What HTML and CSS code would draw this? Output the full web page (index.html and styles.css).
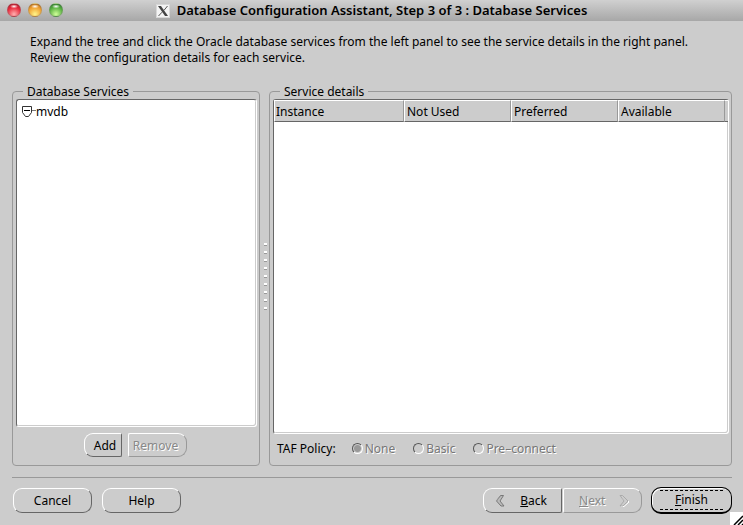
FILE: index.html
```html
<!DOCTYPE html>
<html lang="en">
<head>
  <meta charset="UTF-8" />
  <meta name="viewport" content="width=device-width, initial-scale=1" />
  <title>Database Configuration Assistant, Step 3 of 3 : Database Services</title>
  <link rel="stylesheet" href="styles.css">
</head>
<body>
  <header class="titlebar">
    <div class="lights">
      <button class="light red" type="button" aria-label="Close"></button>
      <button class="light yellow" type="button" aria-label="Minimize"></button>
      <button class="light green" type="button" aria-label="Zoom"></button>
    </div>
    <svg class="x-icon" width="14" height="14" viewBox="0 0 14 14" aria-hidden="true">
      <rect x="0.5" y="0.5" width="13" height="13" fill="#f4f4f4" stroke="#d8d8d8" />
      <path d="M2 2h3l7 10H9z" fill="#444" />
      <path d="M11.5 2L8 6.3M6 8.2L2.5 12" stroke="#555" fill="none" />
    </svg>
    <h1>Database Configuration Assistant, Step 3 of 3 : Database Services</h1>
  </header>

  <main>
    <p class="intro">
      Expand the tree and click the Oracle database services from the left panel to see the service details in the right panel.<br>
      Review the configuration details for each service.
    </p>

    <div class="panes">
      <fieldset class="group">
        <legend>Database Services</legend>
        <div class="well">
          <ul class="tree">
            <li>
              <svg width="14" height="13" viewBox="0 0 14 13" aria-hidden="true">
                <path d="M0.5 1.5h9v6l-3 4h-3l-3-4z" fill="#fff" stroke="#333" />
                <path d="M2 5.5h6" stroke="#000" />
                <path d="M10 5.5h4" stroke="#777" />
              </svg>
              <span>mvdb</span>
            </li>
          </ul>
        </div>
        <div class="service-buttons">
          <button class="btn btn-left add" type="button">Add</button>
          <button class="btn btn-right remove" type="button" disabled>Remove</button>
        </div>
      </fieldset>

      <div class="splitter"><span class="grip"></span></div>

      <fieldset class="group">
        <legend>Service details</legend>
        <div class="well">
          <table class="details">
            <thead>
              <tr>
                <th class="wide">Instance</th>
                <th>Not Used</th>
                <th>Preferred</th>
                <th>Available</th>
                <td></td>
              </tr>
            </thead>
          </table>
        </div>
        <div class="taf">
          <span class="taf-label">TAF Policy:</span>
          <label><input type="radio" name="taf" checked disabled>None</label>
          <label><input type="radio" name="taf" disabled>Basic</label>
          <label><input type="radio" name="taf" disabled>Pre–connect</label>
        </div>
      </fieldset>
    </div>
  </main>

  <footer class="actions">
    <button class="btn big" type="button">Cancel</button>
    <button class="btn big" type="button">Help</button>
    <div class="wizard">
      <button class="btn btn-left big back" type="button">
        <svg width="10" height="12" viewBox="0 0 10 12" aria-hidden="true">
          <path d="M5.5 0.5h3L5 6l4 5H6L1.5 6z" fill="#bbb" stroke="#777" />
          <path d="M5.5 1L1 6" stroke="#999" />
        </svg>
        <span><u>B</u>ack</span>
      </button>
      <button class="btn btn-right big next" type="button" disabled>
        <span><u>N</u>ext</span>
        <svg width="11" height="12" viewBox="0 0 11 12" aria-hidden="true">
          <path d="M2 1.5h2.500L10 7l-5 4.5H2L6 7z" fill="none" stroke="#fff" />
          <path d="M1 0.5h2.500L9 6l-5 5H1L5 6z" fill="#ccc" stroke="#aaa" />
        </svg>
      </button>
    </div>
    <button class="btn finish" type="button"><span><u>F</u>inish</span></button>
  </footer>

  <svg class="resize" width="13" height="13" viewBox="0 0 13 13" aria-hidden="true">
    <rect width="13" height="13" fill="#fff" />
    <path d="M4 13L13 4M8 13l5-5M12 13l1-1" stroke="#000" stroke-width="1.5" />
  </svg>
</body>
</html>
```
FILE: styles.css
```css
:root {
  --bg: #cccccc;
  --line: #999999;
  --dark: #666666;
}

* {
  box-sizing: border-box;
}

html, body {
  margin: 0;
  padding: 0;
  height: 100%;
}

body {
  display: flex;
  flex-direction: column;
  position: relative;
  min-height: 100vh;
  background: var(--bg);
  color: #000;
  font-family: "Noto Sans", "Open Sans", sans-serif;
  font-size: 12px;
  line-height: 15px;
}

button, input {
  font: inherit;
  margin: 0;
}

/* title bar */
.titlebar {
  display: flex;
  align-items: center;
  justify-content: center;
  gap: 7px;
  position: relative;
  height: 21px;
  background: linear-gradient(to bottom, #d0d0d0, #a7a7a7);
}

.titlebar h1 {
  margin: 0;
  font-size: 13px;
  font-weight: 600;
  white-space: nowrap;
}

.lights {
  position: absolute;
  left: 7px;
  top: 3px;
  display: flex;
  gap: 7px;
}

.light {
  width: 14px;
  height: 14px;
  padding: 0;
  border: 1px solid #7775;
  border-radius: 50%;
}

.red { background: radial-gradient(ellipse 4px 2px at 50% 20%, #fff, #fff0), radial-gradient(circle at 50% 85%, #ffb0b0, #e8283a 60%, #a01020); }
.yellow { background: radial-gradient(ellipse 4px 2px at 50% 20%, #fff, #fff0), radial-gradient(circle at 50% 85%, #fff58a, #f0a030 60%, #a86010); }
.green { background: radial-gradient(ellipse 4px 2px at 50% 20%, #fff, #fff0), radial-gradient(circle at 50% 85%, #d0ff9a, #58b040 60%, #207020); }

/* content */
main {
  flex: 1;
  display: flex;
  flex-direction: column;
  padding: 13px 11px 0 12px;
}

.intro {
  margin: 0 0 18px;
  padding-left: 18px;
  line-height: 16px;
}

.panes {
  flex: 1;
  display: grid;
  grid-template-columns: 248px 9px 1fr;
}

.group {
  display: flex;
  flex-direction: column;
  min-width: 0;
  margin: 0;
  padding: 0 2px 8px 3px;
  border: 1px solid var(--line);
  border-radius: 4px;
}

.group legend {
  margin-left: 7px;
  padding: 0 4px;
}

.well {
  flex: 1;
  background: #fff;
  border: 1px solid;
  border-color: var(--dark) #fff #fff var(--dark);
  border-radius: 3px;
  box-shadow: inset -1px -1px 0 var(--bg);
}

.tree {
  list-style: none;
  margin: 0;
  padding: 4px 5px;
}

.tree li {
  display: flex;
  align-items: center;
}

.service-buttons {
  display: flex;
  justify-content: center;
  gap: 6px;
  padding: 6px 2px 0 0;
}

.splitter {
  display: flex;
  align-items: center;
  justify-content: center;
  padding: 8px 0 0 2px;
}

.grip {
  width: 3px;
  height: 72px;
  background: linear-gradient(#fff 2px, var(--line) 2px, var(--line) 3px, transparent 3px) 0 0 / 3px 8px;
}

.details {
  width: 100%;
  border-collapse: separate;
  border-spacing: 0;
  table-layout: fixed;
}

.details th,
.details td {
  height: 22px;
  padding: 0 2px;
  background: var(--bg);
  border: 1px solid;
  border-color: #fff var(--line) var(--dark) #fff;
  font-weight: normal;
  text-align: left;
}

.details th {
  width: 107px;
}

.details .wide {
  width: auto;
  padding-left: 1px;
}

.details td {
  width: 3px;
  padding: 0;
  border-left: 0;
  border-right: 0;
}

.taf {
  display: flex;
  align-items: center;
  gap: 18px;
  padding: 7px 4px 1px;
}

.taf-label {
  margin-right: -2px;
}

.taf label {
  display: flex;
  align-items: center;
  gap: 2px;
  color: #777;
  text-shadow: 1px 1px 0 #fff;
}

.taf input {
  appearance: none;
  width: 11px;
  height: 11px;
  border: 1px solid;
  border-color: #555 #fff #fff #555;
  border-radius: 50%;
}

.taf input:checked {
  background: radial-gradient(circle, #999 3px, transparent 4px);
}

/* buttons */
.btn {
  height: 24px;
  padding: 0;
  background: var(--bg);
  border: 1px solid;
  border-color: #fff var(--dark) var(--dark) #fff;
  border-radius: 9px;
  color: #000;
}

.btn:disabled {
  border-color: #fff var(--line) var(--line) #fff;
  color: #888;
  text-shadow: 1px 1px 0 #fff;
}

.btn-left {
  border-radius: 9px 2px 2px 9px;
}

.btn-right {
  border-radius: 2px 9px 9px 2px;
}

.add {
  width: 38px;
  padding-left: 4px;
}

.remove {
  width: 59px;
  padding-right: 4px;
}

.big {
  width: 79px;
  height: 25px;
}

.actions {
  display: flex;
  align-items: center;
  gap: 10px;
  margin: 11px 11px 0 12px;
  padding: 9px 0 11px 1px;
  border-top: 1px solid var(--line);
}

.wizard {
  display: flex;
  gap: 1px;
  margin: 0 -1px 0 auto;
}

.back,
.next {
  display: flex;
  align-items: center;
  justify-content: space-between;
  padding: 0 14px 0 11px;
}

.next {
  padding: 0 11px 0 15px;
}

.finish {
  width: 81px;
  height: 27px;
  padding: 0 8px;
  border: 1px solid #000;
  border-bottom-width: 2px;
  border-radius: 10px;
  box-shadow: inset 1px 1px 0 #fff;
}

.finish span {
  display: block;
  border: 1px dashed #000;
  border-width: 1px 0;
  line-height: 18px;
}

.resize {
  position: absolute;
  right: 0;
  bottom: 0;
}
```
